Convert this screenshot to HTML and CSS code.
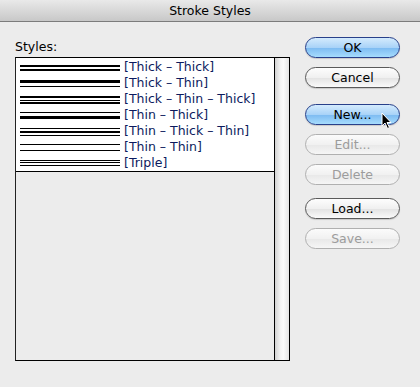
FILE: index.html
```html
<!DOCTYPE html>
<html lang="en">

<head>
    <meta charset="UTF-8">
    <title>Stroke Styles</title>
    <link rel="stylesheet" href="styles.css">
</head>

<body>
    <div class="window">
        <div class="titlebar">Stroke Styles</div>

        <div class="main">
            <div class="left">
                <div class="label">Styles:</div>
                <div class="listbox">
                    <div class="list">
                        <div class="items">
                            <!-- Thick - Thick -->
                            <div class="row">
                                <svg width="100" height="16"><rect x="0" y="6" width="100" height="2"/><rect x="0" y="10" width="100" height="2"/></svg>
                                <span>[Thick – Thick]</span>
                            </div>
                            <!-- Thick - Thin -->
                            <div class="row">
                                <svg width="100" height="16"><rect x="0" y="5" width="100" height="3"/><rect x="0" y="11" width="100" height="1"/></svg>
                                <span>[Thick – Thin]</span>
                            </div>
                            <!-- Thick - Thin - Thick -->
                            <div class="row">
                                <svg width="100" height="16"><rect x="0" y="5" width="100" height="2"/><rect x="0" y="9" width="100" height="1"/><rect x="0" y="11" width="100" height="2"/></svg>
                                <span>[Thick – Thin – Thick]</span>
                            </div>
                            <!-- Thin - Thick -->
                            <div class="row">
                                <svg width="100" height="16"><rect x="0" y="5" width="100" height="1"/><rect x="0" y="9" width="100" height="3"/></svg>
                                <span>[Thin – Thick]</span>
                            </div>
                            <!-- Thin - Thick - Thin -->
                            <div class="row">
                                <svg width="100" height="16"><rect x="0" y="5" width="100" height="1"/><rect x="0" y="8" width="100" height="2"/><rect x="0" y="12" width="100" height="1"/></svg>
                                <span>[Thin – Thick – Thin]</span>
                            </div>
                            <!-- Thin - Thin -->
                            <div class="row">
                                <svg width="100" height="16"><rect x="0" y="5" width="100" height="1"/><rect x="0" y="11" width="100" height="1"/></svg>
                                <span>[Thin – Thin]</span>
                            </div>
                            <!-- Triple -->
                            <div class="row">
                                <svg width="100" height="16"><rect x="0" y="5" width="100" height="1"/><rect x="0" y="7" width="100" height="1"/><rect x="0" y="10" width="100" height="1"/></svg>
                                <span>[Triple]</span>
                            </div>
                        </div>
                    </div>
                    <div class="scroll"></div>
                </div>
            </div>

            <div class="buttons">
                <button class="btn blue ok">OK</button>
                <button class="btn cancel">Cancel</button>
                <button class="btn blue new">New...</button>
                <button class="btn off edit">Edit...</button>
                <button class="btn off delete">Delete</button>
                <button class="btn load">Load...</button>
                <button class="btn off save">Save...</button>
            </div>
        </div>

        <!-- mouse pointer over New... -->
        <svg class="cursor" width="12" height="18" viewBox="0 0 12 18">
            <path d="M1 1 L1 14 L4 11 L6.5 16.5 L8.5 15.5 L6 10.5 L10 10.5 Z" fill="#000" stroke="#fff" stroke-width="1"/>
        </svg>
    </div>
</body>

</html>
```

FILE: styles.css
```css
body {
    margin: 0;
    background-color: #ececec;
    font-family: "DejaVu Sans", sans-serif;
}

.window {
    position: relative;
    width: 420px;
    height: 387px;
    overflow: hidden;
}

.titlebar {
    height: 21px;
    line-height: 21px;
    text-align: center;
    font-size: 12.5px;
    color: #000;
    background: linear-gradient(#e9e9e9, #c8c8c8);
    border-bottom: 1px solid #7c7c7c;
}

.main {
    display: flex;
    padding-left: 15px;
}

.left {
    width: 275px;
}

.label {
    font-size: 12.5px;
    color: #000;
    margin-top: 17px;
    height: 18px;
}

.listbox {
    display: flex;
    height: 302px;
    border: 1px solid #000;
    border-left-color: #222;
}

.list {
    flex: 1;
    border-right: 1px solid #000;
}

.items {
    background: #fff;
    border-bottom: 1px solid #000;
    padding-top: 1px;
}

.row {
    display: flex;
    align-items: center;
    height: 16px;
    padding-left: 4px;
}

.row svg {
    margin-right: 4px;
    flex-shrink: 0;
}

.row span {
    font-size: 12.5px;
    line-height: 16px;
    color: #0c1a5e;
    white-space: nowrap;
}

.scroll {
    width: 14px;
    background: linear-gradient(to right, #d2d2d2, #f4f4f4 40%, #fbfbfb 60%, #e4e4e4);
}

.buttons {
    display: flex;
    flex-direction: column;
    margin-left: 15px;
    padding-top: 15px;
}

.btn {
    width: 95px;
    height: 21px;
    padding: 0;
    border-radius: 11px;
    border: 1px solid #5a5a5a;
    background: linear-gradient(#fdfdfd, #f0f0f0 50%, #e2e2e2 51%, #fafafa);
    font-family: "DejaVu Sans", sans-serif;
    font-size: 12.5px;
    color: #000;
    box-shadow: 0 1px 1px rgba(0, 0, 0, 0.15);
}

.blue {
    border-color: #28408a;
    background: linear-gradient(#d4ebfd, #a9d3f8 50%, #7cbaf1 51%, #a6dcfd);
}

.off {
    border-color: #b0b0b0;
    background: linear-gradient(#fbfbfb, #f1f1f1 50%, #e8e8e8 51%, #f6f6f6);
    color: #9c9c9c;
    box-shadow: none;
}

.cancel {
    margin-top: 9px;
}

.new {
    margin-top: 16px;
}

.edit,
.delete,
.save {
    margin-top: 9px;
}

.load {
    margin-top: 13px;
}

.cursor {
    position: absolute;
    left: 381px;
    top: 112px;
}
```
